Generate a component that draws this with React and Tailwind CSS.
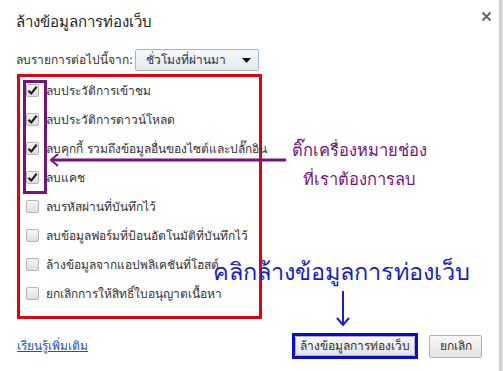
const ITEMS = [
  ['ลบประวัติการเข้าชม', true],
  ['ลบประวัติการดาวน์โหลด', true],
  ['ลบคุกกี้ รวมถึงข้อมูลอื่นของไซต์และปลั๊กอิน', true],
  ['ลบแคช', true],
  ['ลบรหัสผ่านที่บันทึกไว้', false],
  ['ลบข้อมูลฟอร์มที่ป้อนอัตโนมัติที่บันทึกไว้', false],
  ['ล้างข้อมูลจากแอปพลิเคชันที่โฮสต์', false],
  ['ยกเลิกการให้สิทธิ์ใบอนุญาตเนื้อหา', false],
]

function Checkbox({ checked }) {
  return (
    <span className="flex h-[13px] w-[13px] shrink-0 items-center justify-center rounded-[2px] border border-[#b5b5b5] bg-gradient-to-b from-[#f6f6f6] to-[#dedede]">
      {checked && (
        <svg width="11" height="11" viewBox="0 0 11 11">
          <path d="M1.5 5.8 L4.2 8.6 L9.6 1.8" fill="none" stroke="#222" strokeWidth="2.2" strokeLinejoin="round" />
        </svg>
      )}
    </span>
  )
}

export default function App() {
  return (
    <div className="relative flex h-[371px] w-[503px] overflow-hidden bg-white font-['Tahoma','DejaVu_Sans','Liberation_Sans',sans-serif] text-[12px] text-[#333]">
      <div className="relative flex w-[499px] flex-col rounded-tr-[3px] bg-white px-4 pt-[12px]">
        <div className="flex items-center justify-between">
          <h1 className="text-[15px] leading-[20px] text-[#222]">ล้างข้อมูลการท่องเว็บ</h1>
          <svg width="11" height="11" viewBox="0 0 11 11" className="mr-[-9px] mt-[-12px]">
            <path d="M1.5 1.5 L9.5 9.5 M9.5 1.5 L1.5 9.5" stroke="#666" strokeWidth="2" />
          </svg>
        </div>

        <div className="mt-[17px] flex items-center gap-[2px]">
          <span>ลบรายการต่อไปนี้จาก:</span>
          <div className="flex h-[22px] w-[124px] items-center justify-between rounded-[2px] border border-[#a5b5c8] bg-gradient-to-b from-[#f7f9fb] to-[#e2e9f1] pl-[10px] pr-[7px]">
            <span>ชั่วโมงที่ผ่านมา</span>
            <svg width="9" height="5" viewBox="0 0 9 5">
              <path d="M0 0 L9 0 L4.5 5 Z" fill="#111" />
            </svg>
          </div>
        </div>

        <div className="mt-[3px] ml-[1px] w-[245px] border-[3px] border-[#e3000f] pb-[8px] pl-[6px]">
          {ITEMS.map(([label, checked]) => (
            <div key={label} className="flex h-[29px] items-center gap-[7px] first:-mt-[1px]">
              <Checkbox checked={checked} />
              <span className="whitespace-nowrap">{label}</span>
            </div>
          ))}
        </div>

        <div className="mt-[14px] flex items-center">
          <a className="ml-[1px] text-[#15c] underline">เรียนรู้เพิ่มเติม</a>
          <div className="ml-auto mr-[1px] flex items-center gap-[11px]">
            <div className="border-[3px] border-[#0a0ad0] p-0">
              <button className="h-[20px] w-[120px] rounded-[2px] border border-[#b0b0b0] bg-gradient-to-b from-[#f7f7f7] to-[#e3e3e3] text-[12px] text-[#333]">
                ล้างข้อมูลการท่องเว็บ
              </button>
            </div>
            <button className="h-[23px] w-[53px] rounded-[2px] border border-[#b0b0b0] bg-gradient-to-b from-[#f7f7f7] to-[#e3e3e3] text-[12px] text-[#333]">
              ยกเลิก
            </button>
          </div>
        </div>

        {/* annotations */}
        <div className="absolute left-[23px] top-[80px] h-[114px] w-[24px] border-[3px] border-[#7a1180]" />
        <svg className="absolute left-[48px] top-[152px]" width="240" height="16" viewBox="0 0 240 16">
          <path d="M3 8 L238 8" stroke="#7a1180" strokeWidth="3" />
          <path d="M10 2 L3 8 L10 14" fill="none" stroke="#7a1180" strokeWidth="2" />
        </svg>
        <div className="absolute left-[292px] top-[135px] whitespace-nowrap font-['Noto_Sans','DejaVu_Sans',sans-serif] text-[16.5px] leading-[29px] text-[#7a1180]">
          <div>ติ๊กเครื่องหมายช่อง</div>
          <div className="pl-[11px]">ที่เราต้องการลบ</div>
        </div>
        <div className="absolute left-[213px] top-[254px] whitespace-nowrap font-['Noto_Sans','DejaVu_Sans',sans-serif] text-[23.5px] leading-[34px] text-[#1b1bd0]">
          คลิกล้างข้อมูลการท่องเว็บ
        </div>
        <svg className="absolute left-[336px] top-[291px]" width="14" height="36" viewBox="0 0 14 36">
          <path d="M7 0 L7 34" stroke="#1b1bd0" strokeWidth="2" />
          <path d="M1 27 L7 34 L13 27" fill="none" stroke="#1b1bd0" strokeWidth="2" />
        </svg>
      </div>
      <div className="w-[4px] bg-gradient-to-r from-[#c8c8c8] to-[#e4e4e4]" />
    </div>
  )
}
